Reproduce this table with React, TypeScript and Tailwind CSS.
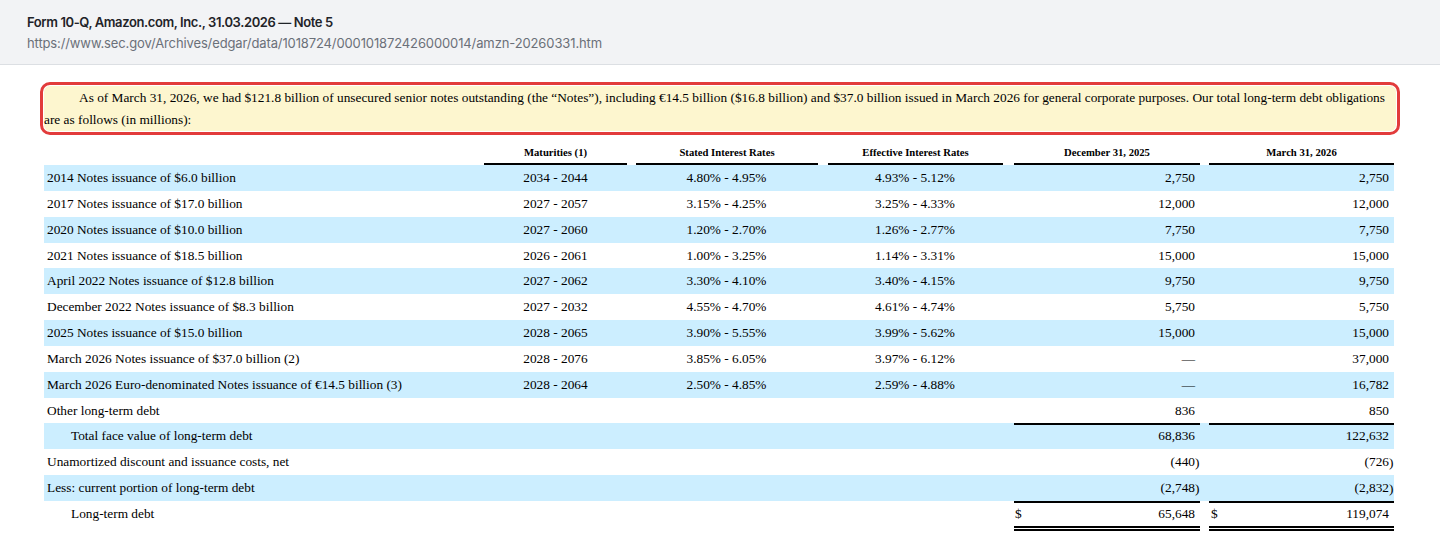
import React from "react";

type Row = {
  label: string;
  indent?: boolean;
  mat?: string;
  stated?: string;
  eff?: string;
  dec: string;
  mar: string;
  blue?: boolean;
  topLine?: boolean;
  dollar?: boolean;
  doubleBottom?: boolean;
};

const rows: Row[] = [
  { label: "2014 Notes issuance of $6.0 billion", mat: "2034 - 2044", stated: "4.80% - 4.95%", eff: "4.93% - 5.12%", dec: "2,750", mar: "2,750", blue: true },
  { label: "2017 Notes issuance of $17.0 billion", mat: "2027 - 2057", stated: "3.15% - 4.25%", eff: "3.25% - 4.33%", dec: "12,000", mar: "12,000" },
  { label: "2020 Notes issuance of $10.0 billion", mat: "2027 - 2060", stated: "1.20% - 2.70%", eff: "1.26% - 2.77%", dec: "7,750", mar: "7,750", blue: true },
  { label: "2021 Notes issuance of $18.5 billion", mat: "2026 - 2061", stated: "1.00% - 3.25%", eff: "1.14% - 3.31%", dec: "15,000", mar: "15,000" },
  { label: "April 2022 Notes issuance of $12.8 billion", mat: "2027 - 2062", stated: "3.30% - 4.10%", eff: "3.40% - 4.15%", dec: "9,750", mar: "9,750", blue: true },
  { label: "December 2022 Notes issuance of $8.3 billion", mat: "2027 - 2032", stated: "4.55% - 4.70%", eff: "4.61% - 4.74%", dec: "5,750", mar: "5,750" },
  { label: "2025 Notes issuance of $15.0 billion", mat: "2028 - 2065", stated: "3.90% - 5.55%", eff: "3.99% - 5.62%", dec: "15,000", mar: "15,000", blue: true },
  { label: "March 2026 Notes issuance of $37.0 billion (2)", mat: "2028 - 2076", stated: "3.85% - 6.05%", eff: "3.97% - 6.12%", dec: "\u2014", mar: "37,000" },
  { label: "March 2026 Euro-denominated Notes issuance of \u20ac14.5 billion (3)", mat: "2028 - 2064", stated: "2.50% - 4.85%", eff: "2.59% - 4.88%", dec: "\u2014", mar: "16,782", blue: true },
  { label: "Other long-term debt", dec: "836", mar: "850" },
  { label: "Total face value of long-term debt", indent: true, dec: "68,836", mar: "122,632", blue: true, topLine: true },
  { label: "Unamortized discount and issuance costs, net", dec: "(440)", mar: "(726)" },
  { label: "Less: current portion of long-term debt", dec: "(2,748)", mar: "(2,832)", blue: true },
  { label: "Long-term debt", indent: true, dec: "65,648", mar: "119,074", topLine: true, dollar: true, doubleBottom: true },
];

function Num({ v }: { v: string }) {
  if (v.startsWith("(")) {
    return (
      <span className="relative">
        {v.slice(0, -1)}
        <span className="absolute left-full top-0">)</span>
      </span>
    );
  }
  return <span>{v}</span>;
}

function AmountCell({
  v,
  row,
  outer,
  inner,
}: {
  v: string;
  row: Row;
  outer: string;
  inner: string;
}) {
  const lines = [
    row.topLine ? "border-t-2 border-black" : "",
    row.doubleBottom ? "border-b-[5px] border-double border-black" : "",
  ].join(" ");
  return (
    <div className={`h-full ${outer}`}>
      <div className={`flex h-full items-start justify-between ${inner} ${lines}`}>
        <span className={row.topLine ? "pt-[2px]" : "pt-[4px]"}>{row.dollar ? "$" : ""}</span>
        <span className={row.topLine ? "pt-[2px]" : "pt-[4px]"}>
          <Num v={v} />
        </span>
      </div>
    </div>
  );
}

const grid = "grid grid-cols-[436px_151px_191px_186px_197px_189px]";

export default function App() {
  return (
    <div className="min-h-[560px] bg-white text-black">
      <div className="h-[65px] border-b border-[#dcdfe3] bg-[#f2f3f5] px-[27px] pt-[13px] font-['Inter',sans-serif]">
        <div className="text-[13px] font-semibold leading-[18px] tracking-[-0.4px] text-[#1f2328]">
          Form 10-Q, Amazon.com, Inc., 31.03.2026 — Note 5
        </div>
        <div className="mt-[3px] text-[13px] leading-[18px] tracking-[-0.12px] text-[#6b7079]">
          https://www.sec.gov/Archives/edgar/data/1018724/000101872426000014/amzn-20260331.htm
        </div>
      </div>

      <div className="px-10 pt-[17px] font-['Liberation_Serif','Times_New_Roman',serif] text-[13.33px]">
        <div className="rounded-[10px] border-[3px] border-[#e23b3b] bg-white p-px">
          <p className="rounded-[6px] bg-[#fdf6cf] pt-[1px] pr-[4px] indent-[35px] leading-[22px]">
            As of March 31, 2026, we had $121.8 billion of unsecured senior notes outstanding (the “Notes”), including €14.5 billion ($16.8 billion) and $37.0 billion issued in March 2026 for general corporate purposes. Our total long-term debt obligations are as follows (in millions):
          </p>
        </div>

        <div className="mx-1 w-[1350px]">
          <div className={`${grid} h-[30px] items-end text-[10.67px] font-bold leading-[12px]`}>
            <div />
            <div className="mx-[4px] border-b-2 border-black pb-[5px] text-center">Maturities (1)</div>
            <div className="ml-[5px] mr-[4px] border-b-2 border-black pb-[5px] text-center">Stated Interest Rates</div>
            <div className="ml-[6px] mr-[5px] border-b-2 border-black pb-[5px] text-center">Effective Interest Rates</div>
            <div className="ml-[6px] mr-[5px] border-b-2 border-black pb-[5px] text-center">December 31, 2025</div>
            <div className="ml-[4px] border-b-2 border-black pb-[5px] text-center">March 31, 2026</div>
          </div>

          {rows.map((r, i) => (
            <div
              key={i}
              className={`${grid} ${r.doubleBottom ? "h-[30px]" : "h-[25.85px]"} leading-[18px] ${r.blue ? "bg-[#cceeff]" : ""}`}
            >
              <div className={`pt-[4px] ${r.indent ? "pl-[27px]" : "pl-[3px]"}`}>{r.label}</div>
              <div className="pt-[4px] text-center">{r.mat ?? ""}</div>
              <div className="pt-[4px] text-center">{r.stated ?? ""}</div>
              <div className="pt-[4px] text-center">{r.eff ?? ""}</div>
              <AmountCell v={r.dec} row={r} outer="ml-[6px] mr-[5px]" inner="pl-px pr-[5px]" />
              <AmountCell v={r.mar} row={r} outer="ml-[4px]" inner="pl-[2px] pr-[5px]" />
            </div>
          ))}
        </div>
      </div>
    </div>
  );
}
